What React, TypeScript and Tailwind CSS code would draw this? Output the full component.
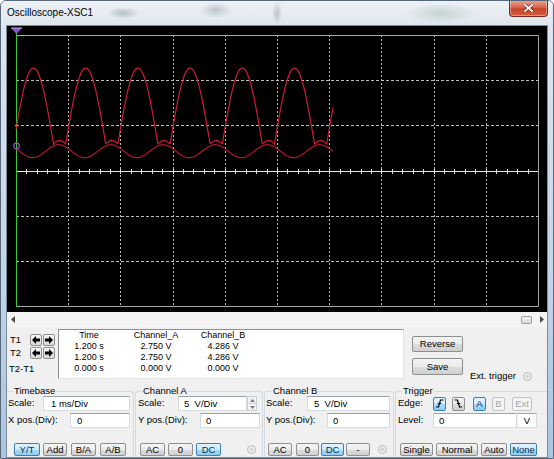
import React from "react";

const OX = 7;
const OY = 26;
const T = 52.2;
const XP0 = 33.5;
const GX0 = 9;
const GX1 = 531;
const GY0 = 9;
const GY1 = 280;
const VD = (GY1 - GY0) / 6;

function pathA(): string {
  const pts: string[] = [];
  const start = XP0 - 20;
  for (let x = 16; x <= 333; x += 0.5) {
    let local = (x - start) % T;
    if (local < 0) local += T;
    let y: number;
    if (local < 40) y = 144 - 76 * Math.sin((Math.PI * local) / 40);
    else y = 144 - 3.5 * Math.sin((Math.PI * (local - 40)) / (T - 40));
    pts.push(`${(x - OX).toFixed(2)},${(y - OY).toFixed(2)}`);
  }
  return "M" + pts.join(" L");
}

function pathB(): string {
  const pts: string[] = [];
  const maxAt = XP0 - 1 + T / 2;
  for (let x = 16; x <= 333; x += 0.5) {
    const y = 151.2 - 6.5 * Math.cos((2 * Math.PI * (x - maxAt)) / T);
    pts.push(`${(x - OX).toFixed(2)},${(y - OY).toFixed(2)}`);
  }
  return "M" + pts.join(" L");
}

const px = (v: number) => Math.round(v) + 0.5;

function Screen() {
  const vlines = [1, 2, 3, 4, 5, 6, 7, 8, 9].map((k) => px(GX0 + k * T));
  const hlines = [1, 2, 4, 5].map((k) => px(GY0 + k * VD));
  const cy = px(GY0 + 3 * VD);
  const ticks: number[] = [];
  for (let i = 1; i < 50; i++) ticks.push(px(GX0 + (i * T) / 5));
  return (
    <svg width="540" height="286" className="block">
      <rect width="540" height="286" fill="#000" />
      {vlines.map((x, i) => (
        <line key={"v" + i} x1={x} x2={x} y1={GY0} y2={GY1} stroke="#bcbcbc" strokeWidth="1" strokeDasharray="2 2" />
      ))}
      {hlines.map((y, i) => (
        <line key={"h" + i} x1={GX0} x2={GX1} y1={y} y2={y} stroke="#bcbcbc" strokeWidth="1" strokeDasharray="3 2" />
      ))}
      <line x1={GX0} x2={GX1} y1={cy} y2={cy} stroke="#e8e8e8" strokeWidth="1" />
      {ticks.map((x, i) => (
        <line key={"t" + i} x1={x} x2={x} y1={cy - 2.5} y2={cy + 2.5} stroke="#e0e0e0" strokeWidth="1" />
      ))}
      <polyline
        points={`${GX0},${GY0 + 0.5} ${GX1 + 0.5},${GY0 + 0.5} ${GX1 + 0.5},${GY1 + 0.5} ${GX0},${GY1 + 0.5}`}
        fill="none"
        stroke="#a8a8a8"
        strokeWidth="1"
      />
      <line x1={GX0 + 0.5} x2={GX0 + 0.5} y1={3} y2={GY1 + 1} stroke="#3cc83c" strokeWidth="1" />
      <path d={pathB()} fill="none" stroke="#b3162c" strokeWidth="1.2" />
      <path d={pathA()} fill="none" stroke="#cc1c34" strokeWidth="1.2" />
      <line x1={GX0 - 1} x2={GX0 + 3} y1={99.5} y2={99.5} stroke="#d08a2a" strokeWidth="1.5" />
      <circle cx={GX0 + 0.5} cy={120} r={2.8} fill="none" stroke="#a050c8" strokeWidth="1.2" />
      <polygon points="4,2 15,2 9.5,8" fill="#9a4cd0" />
      <line x1={4} x2={15} y1={2} y2={2} stroke="#7fd4f4" strokeWidth="1" />
    </svg>
  );
}

const btnBase = "h-[13px] flex items-center justify-center rounded-[2px] border text-[9.5px] leading-none shrink-0";
const btnNormal = "border-[#8e8f8f] bg-[linear-gradient(#f4f4f4,#ececec_50%,#dddddd_50%,#d0d0d0)] text-black";
const btnActive = "border-[#3c7fb1] bg-[linear-gradient(#e3f3fc,#cbeafb_50%,#a8dbf7_50%,#8ecdf0)] text-[#0b2f55]";
const btnDisabled = "border-[#c2c4c6] bg-[#f4f4f4] text-[#a6a6a6]";

function Input({ className, children }: { className: string; children?: React.ReactNode }) {
  return (
    <div
      className={`h-[15px] shrink-0 flex items-center bg-white border border-[#d6dbe2] border-t-[#9aa3ad] text-[9.5px] leading-none ${className}`}
    >
      {children}
    </div>
  );
}

function Radio() {
  return (
    <div className="w-[9px] h-[9px] shrink-0 rounded-full border border-[#b8b8b8] bg-[radial-gradient(circle,#d4d4d4_0,#d4d4d4_30%,#eeeeee_45%,#f4f4f4)]" />
  );
}

function ArrowBtn({ dir, className = "" }: { dir: "l" | "r"; className?: string }) {
  return (
    <div
      className={`w-[12px] h-[12px] shrink-0 border border-[#8e8f8f] rounded-[2px] bg-[linear-gradient(#f6f6f6,#d8d8d8)] flex items-center justify-center ${className}`}
    >
      <svg width="8" height="8" viewBox="0 0 8 8">
        {dir === "l" ? (
          <path d="M0 4 L4 0 V2.5 H8 V5.5 H4 V8 Z" fill="#000" />
        ) : (
          <path d="M8 4 L4 0 V2.5 H0 V5.5 H4 V8 Z" fill="#000" />
        )}
      </svg>
    </div>
  );
}

export default function App() {
  return (
    <div className="w-[554px] h-[459px] overflow-hidden flex flex-col border border-[#56687a] rounded-t-[6px] bg-[linear-gradient(#dfe7ef,#c3d5e8_60%,#aac4e0)] font-['Liberation_Sans',Arial,sans-serif] text-black">
      {/* title bar */}
      <div className="h-[24px] shrink-0 flex items-start pl-[6px] bg-[radial-gradient(ellipse_16px_6px_at_122px_12px,rgba(95,105,115,0.35),transparent),radial-gradient(ellipse_16px_8px_at_215px_9px,rgba(95,105,115,0.3),transparent),radial-gradient(ellipse_5px_12px_at_276px_12px,rgba(95,105,115,0.3),transparent),radial-gradient(ellipse_34px_10px_at_440px_12px,rgba(140,165,145,0.35),transparent),linear-gradient(#edf1f5,#dfe7ee)]">
        <span className="text-[10px] leading-none mt-[7px]">Oscilloscope-XSC1</span>
        <div className="ml-auto mr-[5px] -mt-[1px] w-[39px] h-[17px] rounded-b-[4px] border border-[#7a2a1e] border-t-0 bg-[linear-gradient(#eaa796,#d8664e_45%,#c7422a_55%,#d0603c)] flex items-center justify-center shadow-[inset_0_0_0_1px_rgba(255,255,255,0.35)]">
          <svg width="9" height="8" viewBox="0 0 9 8">
            <path d="M1 1 L8 7 M8 1 L1 7" stroke="#5a1a10" strokeWidth="3" strokeLinecap="square" />
            <path d="M1 1 L8 7 M8 1 L1 7" stroke="#fff" strokeWidth="1.8" strokeLinecap="square" />
          </svg>
        </div>
      </div>

      {/* client */}
      <div className="mx-[5px] flex-1 flex flex-col bg-[#f0f0f0] border border-[#7d8c9b]">
        <div className="h-[286px] shrink-0 bg-black">
          <Screen />
        </div>

        {/* scroll bar */}
        <div className="h-[15px] shrink-0 flex items-center bg-[#f4f4f4]">
          <svg width="4" height="7" viewBox="0 0 4 7" className="ml-[4px] shrink-0">
            <path d="M4 0 L0 3.5 L4 7 Z" fill="#4a4a4a" />
          </svg>
          <div className="flex-1" />
          <div className="w-[11px] h-[8px] shrink-0 rounded-[2px] border border-[#9c9c9c] bg-[linear-gradient(#f4f4f4,#d8d8d8)]" />
          <svg width="4" height="7" viewBox="0 0 4 7" className="ml-[8px] mr-[3px] shrink-0">
            <path d="M0 0 L4 3.5 L0 7 Z" fill="#4a4a4a" />
          </svg>
        </div>

        {/* control panel */}
        <div className="flex-1 flex flex-col text-[9.5px]">
          {/* top row */}
          <div className="h-[59px] shrink-0 flex pt-[2px]">
            <div className="w-[51px] shrink-0 flex flex-col pl-[3px] pt-[5px]">
              <div className="h-[12px] flex items-center">
                <span className="w-[20px] leading-none">T1</span>
                <ArrowBtn dir="l" />
                <ArrowBtn dir="r" className="ml-[1px]" />
              </div>
              <div className="h-[12px] mt-[1px] flex items-center">
                <span className="w-[20px] leading-none">T2</span>
                <ArrowBtn dir="l" />
                <ArrowBtn dir="r" className="ml-[1px]" />
              </div>
              <div className="mt-[4px] leading-[11px] -ml-[1px]">T2-T1</div>
            </div>

            <div className="w-[346px] h-[50px] shrink-0 bg-white border border-[#e2e2e2] border-t-[#8f8f8f] border-l-[#8f8f8f] grid grid-cols-[60px_74px_60px] auto-rows-[11px] text-[9px] leading-[11px] text-center content-start">
              <div>Time</div>
              <div>Channel_A</div>
              <div>Channel_B</div>
              <div>1.200 s</div>
              <div>2.750 V</div>
              <div>4.286 V</div>
              <div>1.200 s</div>
              <div>2.750 V</div>
              <div>4.286 V</div>
              <div>0.000 s</div>
              <div>0.000 V</div>
              <div>0.000 V</div>
            </div>

            <div className="ml-[8px] pt-[7px] flex flex-col shrink-0">
              <div className={`${btnBase} ${btnNormal} w-[51px] h-[16px]`}>Reverse</div>
              <div className={`${btnBase} ${btnNormal} w-[51px] h-[17px] mt-[6px]`}>Save</div>
            </div>

            <div className="ml-[7px] pt-[42px] flex items-center shrink-0 self-start">
              <span className="leading-[10px]">Ext. trigger</span>
              <div className="ml-[7px]">
                <Radio />
              </div>
            </div>
          </div>

          {/* groups row */}
          <div className="flex-1 flex items-start">
            {/* Timebase */}
            <fieldset className="w-[127px] shrink-0 border border-l-0 border-b-0 border-[#d3dbe2] rounded-tr-[3px]">
              <legend className="ml-[6px] px-[1px] leading-[10px]">Timebase</legend>
              <div className="flex items-center h-[15px] pl-[1px]">
                <span className="w-[35px] shrink-0">Scale:</span>
                <Input className="w-[87px] pl-[7px]">1 ms/Div</Input>
              </div>
              <div className="flex items-center h-[15px] mt-[2px] pl-[1px]">
                <span className="w-[62px] shrink-0">X pos.(Div):</span>
                <Input className="w-[60px] pl-[6px]">0</Input>
              </div>
              <div className="flex items-center mt-[15px] pl-[7px]">
                <div className={`${btnBase} ${btnActive} w-[26px]`}>Y/T</div>
                <div className={`${btnBase} ${btnNormal} w-[24px] ml-[3px]`}>Add</div>
                <div className={`${btnBase} ${btnNormal} w-[25px] ml-[4px]`}>B/A</div>
                <div className={`${btnBase} ${btnNormal} w-[26px] ml-[4px]`}>A/B</div>
              </div>
            </fieldset>

            {/* Channel A */}
            <fieldset className="w-[128px] ml-[1px] shrink-0 border border-b-0 border-[#d3dbe2] rounded-t-[3px]">
              <legend className="ml-[6px] px-[1px] leading-[10px]">Channel A</legend>
              <div className="flex items-center h-[15px] pl-[2px]">
                <span className="w-[40px] shrink-0">Scale:</span>
                <Input className="w-[69px] pl-[5px]">5&nbsp;&nbsp;V/Div</Input>
                <div className="w-[10px] h-[15px] shrink-0 flex flex-col border border-[#c9ced4] bg-[#f2f2f2]">
                  <div className="flex-1 flex items-center justify-center border-b border-[#d4d4d4]">
                    <svg width="5" height="3" viewBox="0 0 5 3">
                      <path d="M0 3 L2.5 0 L5 3 Z" fill="#7a7a7a" />
                    </svg>
                  </div>
                  <div className="flex-1 flex items-center justify-center">
                    <svg width="5" height="3" viewBox="0 0 5 3">
                      <path d="M0 0 L2.5 3 L5 0 Z" fill="#7a7a7a" />
                    </svg>
                  </div>
                </div>
              </div>
              <div className="flex items-center h-[15px] mt-[2px] pl-[2px]">
                <span className="w-[62px] shrink-0">Y pos.(Div):</span>
                <Input className="w-[60px] pl-[5px]">0</Input>
              </div>
              <div className="flex items-center mt-[15px] pl-[4px]">
                <div className={`${btnBase} ${btnNormal} w-[25px]`}>AC</div>
                <div className={`${btnBase} ${btnNormal} w-[25px] ml-[3px]`}>0</div>
                <div className={`${btnBase} ${btnActive} w-[25px] ml-[3px]`}>DC</div>
                <div className="ml-[26px]">
                  <Radio />
                </div>
              </div>
            </fieldset>

            {/* Channel B */}
            <fieldset className="w-[130px] ml-[1px] shrink-0 border border-b-0 border-[#d3dbe2] rounded-t-[3px]">
              <legend className="ml-[7px] px-[1px] leading-[10px]">Channel B</legend>
              <div className="flex items-center h-[15px] pl-[1px]">
                <span className="w-[41px] shrink-0">Scale:</span>
                <Input className="w-[83px] pl-[6px]">5&nbsp;&nbsp;V/Div</Input>
              </div>
              <div className="flex items-center h-[15px] mt-[2px] pl-[1px]">
                <span className="w-[61px] shrink-0">Y pos.(Div):</span>
                <Input className="w-[63px] pl-[5px]">0</Input>
              </div>
              <div className="flex items-center mt-[15px] pl-[3px]">
                <div className={`${btnBase} ${btnNormal} w-[24px]`}>AC</div>
                <div className={`${btnBase} ${btnNormal} w-[23px] ml-[4px]`}>0</div>
                <div className={`${btnBase} ${btnActive} w-[23px] ml-[2px]`}>DC</div>
                <div className={`${btnBase} ${btnNormal} w-[24px] ml-[2px]`}>-</div>
                <div className="ml-[8px]">
                  <Radio />
                </div>
              </div>
            </fieldset>

            {/* Trigger */}
            <fieldset className="w-[151px] ml-[1px] shrink-0 border border-b-0 border-r-0 border-[#d3dbe2] rounded-tl-[3px]">
              <legend className="ml-[6px] px-[1px] leading-[10px]">Trigger</legend>
              <div className="flex items-center h-[15px] pl-[2px]">
                <span className="w-[35px] shrink-0">Edge:</span>
                <div className={`${btnBase} ${btnActive} w-[13px] h-[14px]`}>
                  <svg width="9" height="9" viewBox="0 0 9 9">
                    <path d="M1 8 H3.5 L5.5 1 H8.5" fill="none" stroke="#000" strokeWidth="1.2" />
                    <path d="M2.8 4.5 H6.2" stroke="#000" strokeWidth="1" />
                  </svg>
                </div>
                <div className={`${btnBase} ${btnNormal} w-[13px] h-[14px] ml-[6px]`}>
                  <svg width="9" height="9" viewBox="0 0 9 9">
                    <path d="M0.5 1 H3.5 L5.5 8 H8" fill="none" stroke="#000" strokeWidth="1.2" />
                    <path d="M2.8 4.5 H6.2" stroke="#000" strokeWidth="1" />
                  </svg>
                </div>
                <div className={`${btnBase} ${btnActive} w-[13px] h-[14px] ml-[8px]`}>A</div>
                <div className={`${btnBase} ${btnDisabled} w-[13px] h-[14px] ml-[6px]`}>B</div>
                <div className={`${btnBase} ${btnDisabled} w-[20px] h-[14px] ml-[7px]`}>Ext</div>
              </div>
              <div className="flex items-center h-[15px] mt-[2px] pl-[2px]">
                <span className="w-[35px] shrink-0">Level:</span>
                <Input className="w-[84px] pl-[5px]">0</Input>
                <Input className="w-[20px] justify-center border-l-[#eceff2]">V</Input>
              </div>
              <div className="flex items-center mt-[15px] pl-[4px]">
                <div className={`${btnBase} ${btnNormal} w-[33px]`}>Single</div>
                <div className={`${btnBase} ${btnNormal} w-[42px] ml-[3px]`}>Normal</div>
                <div className={`${btnBase} ${btnNormal} w-[26px] ml-[3px]`}>Auto</div>
                <div className={`${btnBase} ${btnActive} w-[27px] ml-[3px]`}>None</div>
              </div>
            </fieldset>
          </div>
        </div>
      </div>
    </div>
  );
}
